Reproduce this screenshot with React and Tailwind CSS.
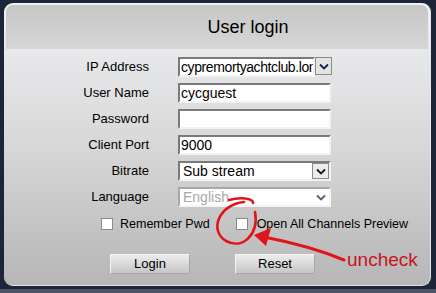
import React from "react";

const Chevron = ({ color = "#10204a", w = 10 }) => (
  <svg width={w} height="7" viewBox="0 0 10 7">
    <path d="M1 1.5 L5 5.5 L9 1.5" fill="none" stroke={color} strokeWidth="1.8" />
  </svg>
);

const Row = ({ label, children }) => (
  <div className="flex h-[26px] items-start">
    <div className="w-[143px] pt-[1px] text-right text-[13px] leading-[18px] text-black">{label}</div>
    <div className="ml-[29px]">{children}</div>
  </div>
);

const inputCls =
  "h-[20px] border-2 border-t-[#7a7a7a] border-l-[#7a7a7a] border-b-[#f2f2f2] border-r-[#f2f2f2] bg-white pl-[1px] text-[14px] leading-[16px] text-black";

const Checkbox = () => (
  <div className="h-[12px] w-[12px] border border-[#8c8c8c] bg-white" />
);

const Button = ({ children }) => (
  <div className="flex h-[20px] w-[80px] items-center justify-center border border-t-[#f4f4f4] border-l-[#f4f4f4] border-b-[#a8a8a8] border-r-[#a8a8a8] bg-gradient-to-b from-[#ececec] to-[#c6c6c6] text-[13px] text-black">
    {children}
  </div>
);

export default function App() {
  return (
    <div
      className="relative h-[293px] w-[436px] overflow-hidden bg-[#1d2638]"
      style={{ fontFamily: '"Liberation Sans", Arial, sans-serif' }}
    >
      <div className="ml-[4px] mt-[3px] h-[283px] w-[427px] rounded-[9px] border-r border-b border-[#e4e6ea] bg-gradient-to-b from-[#f0f1f5] via-[#d8d8d8] to-[#b6b6b6] p-[2px]">
        <div className="flex h-[44px] items-center justify-center rounded-t-[7px] bg-gradient-to-b from-[#c6c6c6] to-[#d6d6d6] pl-[62px] text-[18px] text-black">
          User login
        </div>
        <div className="pt-[8px]">
          <Row label="IP Address">
            <div className="flex">
              <div className={inputCls + " w-[137px] overflow-hidden whitespace-nowrap tracking-[-0.4px]"}>
                cypremortyachtclub.lon
              </div>
              <div className="flex h-[18px] w-[17px] items-center justify-center border border-[#8a8a8a] bg-[#e4e4e4]">
                <Chevron />
              </div>
            </div>
          </Row>
          <Row label="User Name">
            <div className={inputCls + " w-[153px]"}>cycguest</div>
          </Row>
          <Row label="Password">
            <div className={inputCls + " w-[153px]"}></div>
          </Row>
          <Row label="Client Port">
            <div className={inputCls + " w-[153px]"}>9000</div>
          </Row>
          <Row label="Bitrate">
            <div className={inputCls + " flex w-[153px] items-center justify-between pl-[3px]"}>
              <span>Sub stream</span>
              <div className="flex h-[16px] w-[17px] items-center justify-center border border-[#8a8a8a] bg-[#ececec]">
                <Chevron color="#101820" />
              </div>
            </div>
          </Row>
          <Row label="Language">
            <div className="flex h-[20px] w-[153px] items-center justify-between border-2 border-t-[#a8a8a8] border-l-[#a8a8a8] border-b-[#f4f4f4] border-r-[#f4f4f4] bg-white pl-[3px] pr-[3px] text-[14px] text-[#a8a8a8]">
              <span>English</span>
              <Chevron color="#506078" />
            </div>
          </Row>
          <div className="mt-[4px] flex h-[14px] items-center text-[12.5px] text-black">
            <div className="ml-[95px]">
              <Checkbox />
            </div>
            <span className="ml-[7px]">Remember Pwd</span>
            <div className="ml-[26px]">
              <Checkbox />
            </div>
            <span className="ml-[9px]">Open All Channels Preview</span>
          </div>
          <div className="mt-[23px] flex">
            <div className="ml-[104px]">
              <Button>Login</Button>
            </div>
            <div className="ml-[45px]">
              <Button>Reset</Button>
            </div>
          </div>
        </div>
      </div>
      <div className="mt-[3px] h-[4px] w-full bg-[#4a5466]" />
      <svg className="pointer-events-none absolute left-0 top-0" width="436" height="293">
        <path
          d="M229 200 C 240 197, 253 198, 253 203 M244 202 C 220 204, 208 230, 226 241 C 243 250, 259 234, 255 212"
          fill="none"
          stroke="#e0141c"
          strokeWidth="2.6"
          strokeLinecap="round"
        />
        <path d="M344 260 C 320 250, 290 242, 264 237" fill="none" stroke="#e0141c" strokeWidth="3" strokeLinecap="round" />
        <path d="M254 235 L271 228 L266 246 Z" fill="#e0141c" />
        <text x="347" y="266" fontSize="19" fill="#c8141c" fontFamily='"Liberation Sans", Arial, sans-serif'>
          uncheck
        </text>
      </svg>
    </div>
  );
}
